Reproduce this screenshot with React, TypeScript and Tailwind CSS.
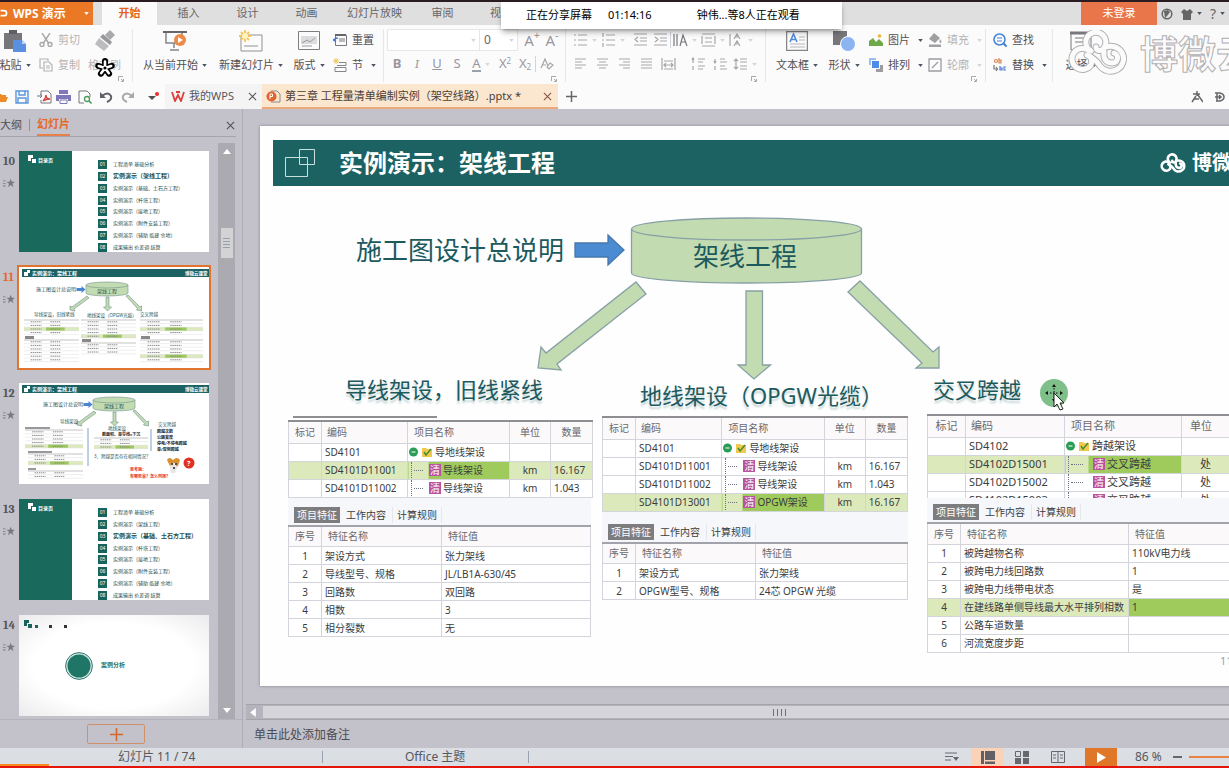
import type { ReactNode } from 'react';
import clsx from 'clsx';

function Caret({ className = 'text-gray-600' }: { className?: string }) {
  return (
    <svg viewBox="0 0 6 4" className={clsx('h-[3px] w-[5px] shrink-0', className)}>
      <path d="M0 0h6L3 4z" fill="currentColor" />
    </svg>
  );
}

function Close() {
  return (
    <svg viewBox="0 0 10 10" className="h-[9px] w-[9px]" stroke="currentColor" strokeWidth="1.2">
      <path d="M1 1l8 8M9 1l-8 8" />
    </svg>
  );
}

/* three joined rings, each closing in a small curl */
function CloudLogo({ className, width = 5 }: { className?: string; width?: number }) {
  return (
    <svg viewBox="0 0 64 46" className={className} fill="none" stroke="currentColor" strokeWidth={width} strokeLinecap="round">
      <path d="M23 21a10 10 0 1 1 13-3c-3 4-8 3-8-1" />
      <path d="M20 20a10.500 10.500 0 1 0 3 15c2-4 0-9-4-10" />
      <path d="M38 17a13 12.500 0 1 1-6 19c-3-5-6-7-9-9" />
      <path d="M36 22c-1 6 2 11 8 11s8-8 2-10" />
    </svg>
  );
}

function BigTool({ icon, label, caret = true, className }: { icon: ReactNode; label: string; caret?: boolean; className?: string }) {
  return (
    <button className={clsx('flex shrink-0 flex-col items-center gap-1', className)}>
      <span className="flex h-6 items-center">{icon}</span>
      <span className="flex h-4 items-center gap-1 whitespace-nowrap">
        {label}
        {caret && <Caret />}
      </span>
    </button>
  );
}

function RowTool({ icon, label, caret, disabled }: { icon: ReactNode; label: string; caret?: boolean; disabled?: boolean }) {
  return (
    <button className={clsx('flex h-4 items-center gap-1 whitespace-nowrap', disabled && 'text-[#b4b4b4]')}>
      <span className="flex w-4 justify-center">{icon}</span>
      {label}
      {caret && <Caret className={disabled ? 'ml-1 text-gray-300' : 'ml-1 text-gray-600'} />}
    </button>
  );
}

function Tool({ label, children, caret, wide }: { label: string; children: ReactNode; caret?: boolean; wide?: boolean }) {
  return (
    <button aria-label={label} className={clsx('flex h-5 shrink-0 items-center justify-center gap-1', caret ? 'w-7' : wide ? 'w-[22px]' : 'w-5')}>
      {children}
      {caret && <Caret className="text-gray-300" />}
    </button>
  );
}

function Lines({ d, dark }: { d: string; dark?: boolean }) {
  return (
    <svg viewBox="0 0 15 14" className="h-[14px] w-[15px] shrink-0" fill="none" stroke={dark ? '#77777c' : '#a5a5a8'} strokeWidth="1.2">
      <path d={d} />
    </svg>
  );
}

function Separator() {
  return <span className="h-4 w-px shrink-0 bg-gray-300" />;
}

function Launcher() {
  return (
    <svg viewBox="0 0 6 6" className="absolute right-2 bottom-0 h-[6px] w-[6px]" fill="none" stroke="#a8a8a8">
      <path d="M.5 5V.5H5M3 3l2 2M5.500 3v2.500H3" />
    </svg>
  );
}

const ribbonTabs = ['插入', '设计', '动画', '幻灯片放映', '审阅'];

function TitleBar() {
  return (
    <header className="relative flex h-[23px] shrink-0 bg-[#dfdfe0] text-[11px] text-[#666]">
      <button className="flex w-[93px] shrink-0 items-center bg-[#ea7824] text-xs font-bold text-white">
        <svg viewBox="0 0 8 14" className="mr-[5px] h-3 w-2" fill="none" stroke="#fff" strokeWidth="2">
          <path d="M0 3h4q3 0 3 3t-3 3H0" />
        </svg>
        WPS 演示
        <span className="ml-auto pr-1"><Caret className="text-white" /></span>
      </button>
      <nav className="ml-[9px] flex">
        <button className="mr-[2px] w-[55px] bg-[#fcfbfc] font-bold text-[#e2641b]">开始</button>
        {ribbonTabs.map((tab) => (
          <button key={tab} className={tab.length > 2 ? 'w-[77px]' : 'w-[59px]'}>{tab}</button>
        ))}
        <button className="pl-[18px]">视</button>
      </nav>
      <div className="ml-auto flex items-stretch">
        <button className="w-[76px] bg-[#e9754a] text-white">未登录</button>
        <div className="flex items-center gap-2 px-1">
          <svg viewBox="0 0 12 12" className="h-3 w-3">
            <circle cx="6" cy="6" r="4.800" fill="none" stroke="#666" strokeWidth="1.500" />
            <path d="M3 3l4-1 2 2-3 4-2 2z" fill="#666" />
          </svg>
          <button aria-label="皮肤" className="flex items-center gap-1">
            <svg viewBox="0 0 12 12" className="h-3 w-3"><path d="M3 1l3 2 3-2 3 3-2 2v6H2V6L0 4z" fill="#666" /></svg>
            <Caret />
          </button>
          <button className="flex items-center gap-1 text-sm leading-none">?<Caret /></button>
        </div>
      </div>
      <div className="absolute -top-px left-[501px] z-10 flex h-7 w-[341px] items-center bg-white pl-[25px] whitespace-nowrap text-black shadow-md shadow-black/30">
        <span>正在分享屏幕</span>
        <time className="ml-4">01:14:16</time>
        <span className="ml-[45px]">钟伟...等8人正在观看</span>
      </div>
    </header>
  );
}

function Ribbon() {
  return (
    <section className="relative flex h-[59px] shrink-0 bg-[#fcfbfc] pt-1 pb-[2px] text-[11px] text-[#505055]">
      <div className="relative flex w-[133px] shrink-0 border-r border-gray-200">
        <BigTool
          className="-ml-1 w-[38px]"
          label="粘贴"
          icon={
            <svg viewBox="0 0 24 24" className="h-6 w-6">
              <path d="M1 4h18v16H1z" fill="#77777b" />
              <path d="M6 1h8v4H6z" fill="#606064" />
              <path d="M10 11h9l4 4v8H10z" fill="#5b8fe0" />
              <path d="M19 11v4h4z" fill="#b9d1f6" />
            </svg>
          }
        />
        <div className="ml-1 flex flex-col gap-[9px] pt-[3px]">
          <RowTool
            disabled
            label="剪切"
            icon={
              <svg viewBox="0 0 14 14" className="h-[14px] w-[14px]" fill="none" stroke="#a8a8a8" strokeWidth="1.400">
                <path d="M3 0l6.500 10M11 0L4.500 10" /><circle cx="3" cy="11.500" r="2" /><circle cx="11" cy="11.500" r="2" />
              </svg>
            }
          />
          <RowTool
            disabled
            label="复制"
            icon={
              <svg viewBox="0 0 14 14" className="h-[14px] w-[14px]" fill="none" stroke="#b4b4b4" strokeWidth="1.200">
                <path d="M9 3V1H1v9h3M5 4h5l3 3v6H5zM7 8h4M7 10h4" />
              </svg>
            }
          />
        </div>
        <div className="ml-2 text-[#b4b4b4]">
          <BigTool
            label="格式刷"
            caret={false}
            icon={
              <svg viewBox="0 0 24 22" className="h-[22px] w-6" fill="#a9a9ab">
                <path d="M17 0l5 5-5 5-5-5z" /><path d="M10 4l9 8-2 3-10-8z" fill="#98989b" /><path d="M6 8l10 8-5 5L2 14z" fill="#bcbcbe" />
              </svg>
            }
          />
        </div>
        <svg viewBox="0 0 20 20" className="absolute top-[29px] left-[95px] h-[20px] w-[20px]" strokeLinecap="round">
          <path d="M10 10V3M10 10l6.700-2.200M10 10l4.100 5.700M10 10l-4.100 5.700M10 10L3.300 7.800" stroke="#000" strokeWidth="6" />
          <path d="M10 10V3.500M10 10l6.200-2M10 10l3.800 5.200M10 10l-3.800 5.200M10 10L3.800 8" stroke="#fff" strokeWidth="2.600" />
          <circle cx="10" cy="10" r="1.600" fill="#000" />
        </svg>
        <Launcher />
      </div>

      <div className="flex w-[251px] shrink-0 border-r border-gray-200 pl-1">
        <BigTool
          className="w-[76px]"
          label="从当前开始"
          icon={
            <svg viewBox="0 0 24 22" className="h-[22px] w-6" fill="none">
              <path d="M0 2h24" stroke="#66666a" strokeWidth="2" /><path d="M3 3v10h16V3M11 13v5M7 20h9" stroke="#85858a" strokeWidth="1.500" />
              <circle cx="17" cy="10" r="6" fill="#ed8a45" /><path d="M15 7l5 3-5 3z" fill="#fff" />
            </svg>
          }
        />
        <BigTool
          className="w-[76px]"
          label="新建幻灯片"
          icon={
            <svg viewBox="0 0 24 22" className="h-[22px] w-6" fill="none">
              <path d="M2 5h21v16H2zM5 16h14" stroke="#909095" />
              <path d="M6 0v12M0 6h12M2 2l8 8M10 2l-8 8" stroke="#f1c453" strokeWidth="1.800" /><circle cx="6" cy="6" r="3" fill="#fff3c4" />
            </svg>
          }
        />
        <BigTool
          className="w-10"
          label="版式"
          icon={
            <svg viewBox="0 0 22 20" className="h-5 w-[22px]" fill="none" stroke="#7e7e83">
              <path d="M.5.5h21v18H.5z" /><path d="M3 5h16v8H3z" fill="#dcdcdf" stroke="none" /><path d="M4 12l5-3 3 2 5-4M4 15h10" stroke="#9a9a9f" />
            </svg>
          }
        />
        <div className="ml-[3px] flex flex-col gap-[9px] pt-[3px]">
          <RowTool
            label="重置"
            icon={
              <svg viewBox="0 0 14 14" className="h-[14px] w-[14px]" fill="none" stroke="#77777c">
                <path d="M2.500 2.500h11v10h-11zM6 6h6M6 8h6" /><path d="M2 2h11" stroke="#66666a" strokeWidth="2" /><path d="M1 8q0-3 4-3M1 8l-1-2M1 8l2-1" stroke="#4c7fd0" strokeWidth="1.400" />
              </svg>
            }
          />
          <RowTool
            label="节"
            caret
            icon={
              <svg viewBox="0 0 14 14" className="h-[14px] w-[14px]" fill="none" stroke="#85858a">
                <path d="M6 4.500h7v3H4M2 9.500h11v4H2z" /><path d="M3 0v6M0 3h6M1 1l4 4M5 1L1 5" stroke="#f1c453" />
              </svg>
            }
          />
        </div>
      </div>

      <div className="relative w-[182px] shrink-0 border-r border-gray-200 pl-[3px] text-[15px] text-[#98989c]">
        <div className="flex h-[22px] items-center">
          <span className="relative flex items-center">
            <select aria-label="字体" className="h-[22px] w-[93px] appearance-none border border-gray-200 bg-white"><option></option></select>
            <span className="absolute right-1"><Caret className="text-gray-300" /></span>
          </span>
          <span className="relative flex items-center">
            <select aria-label="字号" className="h-[22px] w-[38px] appearance-none border border-l-0 border-gray-200 bg-white pl-1 text-xs text-[#66666a]"><option>0</option></select>
            <span className="absolute right-1"><Caret className="text-gray-300" /></span>
          </span>
          <button className="ml-1 flex w-5 items-start justify-center leading-5">
            A<span className="text-[10px] leading-[10px]">+</span>
          </button>
          <button className="flex w-5 items-start justify-center leading-5">
            A<span className="text-[10px] leading-[10px]">-</span>
          </button>
        </div>
        <div className="mt-[3px] flex h-5 items-center text-[13px]">
          <Tool label="加粗"><b>B</b></Tool>
          <Tool label="斜体"><i className="font-serif">I</i></Tool>
          <Tool label="下划线"><u>U</u></Tool>
          <Tool label="阴影"><span>S</span></Tool>
          <Tool label="字体颜色" caret><span className="border-b-2 border-gray-400 leading-[14px]">A</span></Tool>
          <Tool label="上标"><span>X<sup className="text-[8px]">2</sup></span></Tool>
          <Tool label="下标"><span>X<sub className="text-[8px]">2</sub></span></Tool>
          <Separator />
          <Tool label="清除格式"><Lines d="M2 11L6 2l3 7M3 8h4M8 10l3-4 3 2-4 4z" /></Tool>
        </div>
        <Launcher />
      </div>

      <div className="relative w-[200px] shrink-0 border-r border-gray-200 pl-[5px]">
        <div className="flex h-[22px] items-center">
          <Tool label="项目符号" caret><Lines d="M1 2h2M5 2h9M1 7h2M5 7h9M1 12h2M5 12h9" /></Tool>
          <Tool label="编号" caret><Lines d="M2 0v4M5 2h9M1 7h2M5 7h9M2 10v4M5 12h9" /></Tool>
          <span className="w-[3px]" />
          <Tool label="减少缩进"><Lines d="M1 1h13M7 5h7M7 8h7M1 12h13M5 4L2 6.500 5 9" /></Tool>
          <Tool label="增加缩进"><Lines d="M1 1h13M7 5h7M7 8h7M1 12h13M2 4l3 2.500L2 9" /></Tool>
          <Separator />
          <Tool label="文字方向" caret><Lines dark d="M1 1v12M4 1v12M7 13l3-11 4 11M8 9h5" /></Tool>
          <Tool label="对齐文本" caret><Lines d="M1 1h13M1 13h13M1 3v8M14 3v8M4 5h7M4 9h7" /></Tool>
          <Tool label="分散" caret><Lines d="M1 1v12M5 6l3-5 3 5M6 4h4M5 13l3-5 3 5M6 11h4" /></Tool>
        </div>
        <div className="mt-[3px] -ml-[2px] flex h-5 items-center">
          <Tool wide label="左对齐"><Lines d="M2 2h11M2 5h7M2 8h11M2 11h7" /></Tool>
          <Tool wide label="居中"><Lines d="M2 2h11M4 5h7M2 8h11M4 11h7" /></Tool>
          <Tool wide label="右对齐"><Lines d="M2 2h11M6 5h7M2 8h11M6 11h7" /></Tool>
          <Tool wide label="两端对齐"><Lines d="M2 2h11M2 5h11M2 8h11M2 11h11" /></Tool>
          <Tool wide label="分散对齐"><Lines d="M1 1v12M14 1v12M3 4h9M3 12h9M3 8h9M5 6L3 8l2 2M10 6l2 2-2 2" /></Tool>
          <span className="mx-1"><Separator /></span>
          <Tool wide label="段前"><Lines d="M2 1v5M1 3l1-2 1 2M7 2h7M7 5h5M2 9v4M7 9h7M7 12h5" /></Tool>
          <Tool wide label="段后"><Lines d="M2 2v4M1 4l1 2 1-2M7 2h5M7 5h7M2 9v4M7 9h5M7 12h7" /></Tool>
          <Tool caret label="行距"><Lines d="M3 2v10M1 4l2-2 2 2M1 10l2 2 2-2M7 2h7M7 5h7M7 9h7M7 12h7" /></Tool>
        </div>
        <Launcher />
      </div>

      <div className="relative flex w-[220px] shrink-0 border-r border-gray-200 pl-[6px]">
        <BigTool
          className="w-[50px]"
          label="文本框"
          icon={
            <svg viewBox="0 0 22 20" className="h-5 w-[22px]" fill="none" stroke="#85858a">
              <path d="M.5.5h21v19H.5z" strokeWidth="1.500" /><path d="M13 6h6M13 9h6M4 13h15M4 16h15" stroke="#b4b4b8" /><path d="M4 11l3.500-8L11 11M5 8.500h5" stroke="#4c8bd8" strokeWidth="1.600" />
            </svg>
          }
        />
        <BigTool
          className="ml-[2px] w-10"
          label="形状"
          icon={<svg viewBox="0 0 24 22" className="h-[22px] w-6"><path d="M1 1h14v14H1z" fill="#77777b" /><circle cx="16" cy="14" r="7.500" fill="#8bb4f0" stroke="#fff" /></svg>}
        />
        <div className="ml-1 flex flex-col gap-[9px] pt-[3px]">
          <RowTool
            caret
            label="图片"
            icon={<svg viewBox="0 0 14 12" className="h-3 w-[14px]"><path d="M0 12V7l4-3 3 4 3-3 4 4v3z" fill="#6fa84a" /><circle cx="10.500" cy="2" r="1.800" fill="#efb43f" /></svg>}
          />
          <RowTool
            caret
            label="排列"
            icon={<svg viewBox="0 0 14 14" className="h-[14px] w-[14px]"><path d="M0 0h7v7H0z" fill="#9bbdf0" /><path d="M7 7h7v7H7z" fill="#9c9ca1" /><path d="M2.500 2.500h8v8h-8z" fill="#4f8be6" stroke="#fff" /></svg>}
          />
        </div>
        <div className="ml-1 flex flex-col gap-[9px] pt-[3px]">
          <RowTool
            disabled
            caret
            label="填充"
            icon={<svg viewBox="0 0 14 14" className="h-[14px] w-[14px]" fill="#a0a0a3"><path d="M6 0l6 5-5 5-6-4zM1 11.500h12V14H1z" /><path d="M12 6q3 4 0 4-1-1 0-4" /></svg>}
          />
          <RowTool
            disabled
            caret
            label="轮廓"
            icon={<svg viewBox="0 0 14 14" className="h-[14px] w-[14px]" fill="none" stroke="#9c9ca0" strokeWidth="1.300"><path d="M1 1h12v12H1zM4 10l6-6" /></svg>}
          />
        </div>
        <Launcher />
      </div>

      <div className="flex w-[67px] shrink-0 border-r border-gray-200 pl-[6px]">
        <div className="flex flex-col gap-[9px] pt-[3px]">
          <RowTool
            label="查找"
            icon={<svg viewBox="0 0 14 14" className="h-[14px] w-[14px]" fill="none" stroke="#4482d6" strokeWidth="1.500"><circle cx="6.500" cy="6.500" r="5.500" /><path d="M4 5h5M4 8h5" strokeWidth="1" /><path d="M10.500 10.500l3 3" strokeWidth="2" /></svg>}
          />
          <RowTool
            caret
            label="替换"
            icon={
              <svg viewBox="0 0 14 14" className="h-[14px] w-[14px]" fill="none" strokeWidth="1.200">
                <circle cx="3" cy="3" r="1.500" stroke="#d8844e" /><path d="M6 0v5h2V2H6" stroke="#d8844e" /><path d="M1 7v4h3M3 9l1.500 2L3 13" stroke="#77777c" /><path d="M7 8v4h2v-2H7M13 9h-2v3h2" stroke="#4c7fd0" />
              </svg>
            }
          />
        </div>
      </div>
      <BigTool
        className="ml-1 w-12"
        label="选择"
        icon={<svg viewBox="0 0 22 20" className="h-5 w-[22px]" fill="none" stroke="#77777c"><path d="M1 1v18h20V1M5 7h11M5 11h11" /><path d="M0 2h22" strokeWidth="3" /></svg>}
      />
      <div className="pointer-events-none absolute top-[5px] left-[1068px] flex items-center gap-2 whitespace-nowrap">
        <span className="relative">
          <CloudLogo className="h-[46px] w-[64px] text-[#b0b0b3]" width={7} />
          <CloudLogo className="absolute inset-0 h-[46px] w-[64px] text-[#fcfbfc]" width={5} />
        </span>
        <span className="text-[38px] leading-[44px] font-bold text-[#fcfbfc] [-webkit-text-stroke:1px_#b0b0b3]">博微云</span>
      </div>
    </section>
  );
}

function DocumentTabs() {
  return (
    <div className="flex h-[25px] shrink-0 bg-[#fcfbfc] text-[11px] text-[#55555a]">
      <div className="flex w-[165px] shrink-0 items-center">
        <button aria-label="打开" className="-ml-1 w-3"><svg viewBox="0 0 12 12" className="h-3 w-3"><path d="M0 3h5l1 1h4v2h2l-2 5H0z" fill="#f08a24" /></svg></button>
        <button aria-label="保存" className="ml-[7px]"><svg viewBox="0 0 14 14" className="h-[14px] w-[14px]" fill="none" stroke="#5b95dc" strokeWidth="1.400"><path d="M1 1h12v12H1zM4 1v4h6V1M3 13V8h8v5" /></svg></button>
        <button aria-label="输出PDF" className="ml-2"><svg viewBox="0 0 15 14" className="h-[14px] w-[15px]" fill="none" stroke="#77777c"><path d="M4 5V1h7l3 3v9H4v-3" /><path d="M0 6h4M3 4l2 2-2 2" /><path d="M6 11q3-3 3-6 0 4 4 4-4 0-7 2" stroke="#d8423c" strokeWidth="1.400" /></svg></button>
        <button aria-label="打印" className="ml-1"><svg viewBox="0 0 15 14" className="h-[14px] w-[15px]"><path d="M3 0h9v4H3zM0 5h15v6h-3V9H3v2H0z" fill="#7f78b8" /><path d="M4 10h7v3.500H4z" fill="none" stroke="#7f78b8" /></svg></button>
        <button aria-label="打印预览" className="ml-[7px]"><svg viewBox="0 0 14 14" className="h-[14px] w-[14px]" fill="none" stroke="#77777c"><path d="M6 13H1V1h8l3 3v3" /><circle cx="9" cy="9" r="2.500" stroke="#4e9a5c" strokeWidth="1.300" /><path d="M11 11l2.500 2.500" stroke="#4e9a5c" strokeWidth="1.600" /></svg></button>
        <button aria-label="撤销" className="ml-2"><svg viewBox="0 0 13 12" className="h-3 w-[13px]" fill="none" stroke="#606066" strokeWidth="2"><path d="M2 5q6-5 9 0 1 4-4 6" /><path d="M0 1v6h6z" fill="#606066" stroke="none" /></svg></button>
        <button aria-label="恢复" className="ml-2"><svg viewBox="0 0 13 12" className="h-3 w-[13px]" fill="none" stroke="#a8a8ac" strokeWidth="2"><path d="M11 5Q5 0 2 5q-1 4 4 6" /><path d="M13 1v6H7z" fill="#a8a8ac" stroke="none" /></svg></button>
        <span className="ml-[6px]"><Separator /></span>
        <button aria-label="自定义" className="ml-2"><svg viewBox="0 0 11 10" className="h-[10px] w-[11px]"><path d="M0 4h8L4 8z" fill="#505055" /><circle cx="9" cy="2" r="2" fill="#ee2a2a" /></svg></button>
      </div>
      <div className="flex w-[97px] shrink-0 items-center bg-[#f5f4f5] pl-[6px]">
        <svg viewBox="0 0 14 11" className="mr-1 h-[11px] w-[14px]" fill="none" stroke="#dc3f3a" strokeWidth="1.800"><path d="M1 1l3 9 3-6 3 6 3-9M5 1h4" /></svg>
        <a href="#home">我的WPS</a>
        <button aria-label="关闭我的WPS" className="ml-auto pr-[5px]"><Close /></button>
      </div>
      <div className="flex shrink-0 items-center border-b-2 border-[#ecaa78] bg-[#fbe7cf] pt-[2px] pr-[6px] pl-1">
        <svg viewBox="0 0 15 13" className="mr-1 h-[13px] w-[15px]" fill="none"><path d="M5 1h6l3 3v8H5" stroke="#88888c" /><circle cx="5.500" cy="6.500" r="5" fill="#e2622d" /><path d="M4 9V4h2.500v2.500H4" stroke="#fff" /></svg>
        <a href="#document" className="text-[#4a4038]">第三章 工程量清单编制实例（架空线路）.pptx *</a>
        <button aria-label="关闭文档" className="ml-[22px] text-[#8a5540]"><Close /></button>
      </div>
      <button aria-label="新建" className="ml-2"><svg viewBox="0 0 11 11" className="h-[11px] w-[11px]" stroke="#66666a" strokeWidth="1.500"><path d="M0 5.500h11M5.500 0v11" /></svg></button>
      <div className="ml-auto flex items-center gap-3 pr-1">
        <svg viewBox="0 0 12 12" className="h-3 w-3" fill="none" stroke="#66666a" strokeWidth="1.500"><path d="M2 3h7M6 0v5M5 5L1 11M7 4l5 7M3 8h5" /></svg>
        <svg viewBox="0 0 10 10" className="h-[10px] w-[10px]" fill="none" stroke="#66666a" strokeWidth="1.500"><path d="M0 1h5q4 1 4 4t-4 4H1M2 1v8M0 5h6M4 3l2 2-2 2" /></svg>
      </div>
    </div>
  );
}

const agenda = [
  '工程清单 基础分析',
  '实例演示（架线工程）',
  '实例演示（基础、土石方工程）',
  '实例演示（杆塔工程）',
  '实例演示（接地工程）',
  '实例演示（附件安装工程）',
  '实例演示（辅助 临建 余地）',
  '成果输出 价差调 结算',
];

function AgendaThumb({ active }: { active: number }) {
  return (
    <div className="flex h-full bg-white">
      <div className="flex w-[53px] shrink-0 items-start gap-[2px] bg-[#1a695d] pt-1 pl-[9px] text-[5px] leading-[10px] font-bold text-white">
        <svg viewBox="0 0 8 8" className="h-2 w-2"><path d="M0 0h5v3H3v3H0zM4 4h4v4H4z" fill="#fff" /></svg>
        目录页
      </div>
      <ul className="flex flex-1 flex-col justify-between pt-[9px] pl-[26px] text-[5px] leading-[9px] text-[#1c4c48]">
        {agenda.map((item, i) => (
          <li key={item} className="flex items-center gap-[6px] whitespace-nowrap">
            <span className="h-[9px] w-[9px] shrink-0 bg-[#17645c] text-center text-white">{`0${i + 1}`}</span>
            <span className={i === active ? 'text-[6px] font-bold' : ''}>{item}</span>
          </li>
        ))}
      </ul>
    </div>
  );
}

function MiniTable({ x, y, w, rows, mark }: { x: number; y: number; w: number; rows: number; mark?: number }) {
  return (
    <g>
      <path d={`M${x} ${y}h${w}`} stroke="#9a9aa0" strokeWidth=".6" />
      {mark !== undefined && (
        <>
          <rect x={x} y={y + mark * 3.6} width={w} height="3.6" fill="#dbe9bd" />
          <rect x={x + w * 0.4} y={y + mark * 3.6} width={w * 0.34} height="3.6" fill="#9cc95b" />
        </>
      )}
      {Array.from({ length: rows }, (_, i) => (
        <g key={i}>
          <path d={`M${x + w * 0.12} ${y + 1.8 + i * 3.6}h${w * 0.2}M${x + w * 0.48} ${y + 1.8 + i * 3.6}h${w * 0.18}`} stroke="#8a8a8e" strokeWidth="1" strokeDasharray="1.500 .6" />
          <path d={`M${x} ${y + 3.6 + i * 3.6}h${w}`} stroke="#dcdce0" strokeWidth=".5" />
        </g>
      ))}
    </g>
  );
}

function MiniHeader() {
  return (
    <g>
      <path d="M3 2h187v8H3z" fill="#1d6262" />
      <path d="M5 5h4v4H5zM8 3h3v3H8z" fill="#fff" />
      <text x="13" y="8" fontSize="5" fontWeight="700" fill="#fff">实例演示：架线工程</text>
      <text x="166" y="8" fontSize="4.500" fontWeight="700" fill="#fff">博微云课堂</text>
    </g>
  );
}

function MiniDiagram({ dx, dy }: { dx: number; dy: number }) {
  return (
    <g transform={`translate(${dx} ${dy})`}>
      <text x="17" y="24" fontSize="5" fill="#1a5558">施工图设计总说明</text>
      <path d="M57.500 21h5v-2l4 3.500-4 3.500v-2h-5z" fill="#4a86d0" />
      <path d="M67 18a21 3 0 0 1 42 0v8a21 3 0 0 1-42 0z" fill="#c3dbb1" stroke="#6f9090" strokeWidth=".6" />
      <path d="M67 18a21 3 0 0 0 42 0" fill="none" stroke="#6f9090" strokeWidth=".6" />
      <text x="78" y="26" fontSize="5" fill="#1a5558">架线工程</text>
      <path d="M68 29l2 2-15 11 1 2-5-1 0-4 2 1zM87 30h3v10h2.500l-4 4-4-4H87zM107 29l2-1 12 12 1.500-1v5l-5-1 1-1.500z" fill="#c3dbb1" stroke="#6f9090" strokeWidth=".6" />
    </g>
  );
}

function DiagramThumb() {
  return (
    <svg viewBox="0 0 190 101" className="h-full w-full bg-white">
      <MiniHeader />
      <MiniDiagram dx={0} dy={0} />
      <g fontSize="4.500" fill="#1a5558">
        <text x="15" y="49">导线架设，旧线紧线</text>
        <text x="68" y="50">地线架设（OPGW光缆）</text>
        <text x="121" y="49">交叉跨越</text>
      </g>
      <MiniTable x={5} y={53} w={55} rows={4} mark={2} />
      <path d="M6 69h9v3H6z" fill="#888" />
      <MiniTable x={5} y={73} w={55} rows={6} />
      <MiniTable x={62} y={53} w={55} rows={5} mark={4} />
      <path d="M63 72h9v3h-9z" fill="#888" />
      <MiniTable x={62} y={76} w={55} rows={3} />
      <MiniTable x={121} y={53} w={63} rows={4} mark={2} />
      <path d="M122 69h9v3h-9z" fill="#888" />
      <MiniTable x={121} y={73} w={63} rows={6} mark={4} />
    </svg>
  );
}

function QuestionThumb() {
  return (
    <svg viewBox="0 0 190 101" className="h-full w-full bg-white">
      <MiniHeader />
      <MiniDiagram dx={7} dy={-1} />
      <g fontSize="4.500" fill="#1a5558">
        <text x="41" y="40">导线架设</text>
        <text x="89" y="47">地线架设</text>
        <text x="139" y="43">交叉跨越</text>
        <text x="75" y="75">3、跨越是否存在相同情况？</text>
      </g>
      <g fontSize="4" fontWeight="700" fill="#222">
        <text x="83" y="53">截面积、单导线=下沉</text>
        <text x="138" y="50">跨越次数</text>
        <text x="138" y="56">公路宽度</text>
        <text x="138" y="62">停电/不停电跨越</text>
        <text x="138" y="68">单/双侧跨越</text>
      </g>
      <path d="M69 45v38M132 46v22" stroke="#7ba0c8" />
      <path d="M6 44h25v2H6zM9 68h24v2H9zM9 85h8v2H9z" fill="#99999d" />
      <MiniTable x={6} y={47} w={58} rows={5} mark={4} />
      <MiniTable x={9} y={71} w={55} rows={3} mark={2} />
      <MiniTable x={9} y={88} w={55} rows={2} />
      <MiniTable x={75} y={55} w={54} rows={3} mark={2} />
      <g fontSize="4" fontWeight="700" fill="#e33025">
        <text x="111" y="88">思考题：</text>
        <text x="111" y="95">有哪些量？怎么列项？</text>
      </g>
      <path d="M148 77q2-4 6 0 4-4 7 0l-2 6-4 3-4-3z" fill="#d9912f" />
      <path d="M152 80h5l1 5-2 5h-4l-1-5z" fill="#e8e6e4" />
      <circle cx="153" cy="81" r="1" fill="#222" /><circle cx="157" cy="81" r="1" fill="#222" /><circle cx="155" cy="85" r="1" fill="#222" />
      <circle cx="170" cy="80" r="5.500" fill="#e03127" />
      <text x="168" y="83" fontSize="7" fontWeight="700" fill="#fff">?</text>
    </svg>
  );
}

function CaseThumb() {
  return (
    <div className="relative flex h-full items-center bg-radial from-white from-60% to-[#ebebed] pl-[46px]">
      <svg viewBox="0 0 50 10" className="absolute top-[5px] left-[5px] h-[10px] w-[50px]" fill="#17645c"><path d="M0 0h5v3H3v3H0zM4 4h4v4H4zM11 5h3v3h-3z" /><path d="M25 5h3v3h-3zM40 5h3v3h-3z" fill="#333" /></svg>
      <svg viewBox="0 0 28 28" className="h-7 w-7"><circle cx="14" cy="14" r="13.400" fill="#cfe6e0" stroke="#35786f" /><circle cx="14" cy="14" r="11.500" fill="#1f7566" /></svg>
      <span className="ml-2 text-[6px] font-bold text-[#1f7566]">案例分析</span>
    </div>
  );
}

const thumbs = [
  { page: 10, view: <AgendaThumb active={1} /> },
  { page: 11, view: <DiagramThumb /> },
  { page: 12, view: <QuestionThumb /> },
  { page: 13, view: <AgendaThumb active={2} /> },
  { page: 14, view: <CaseThumb /> },
];

function SlidesPane() {
  return (
    <aside className="flex w-[243px] shrink-0 flex-col border-r border-[#aeadb6] text-[11px] text-[#505055]">
      <div className="mr-[6px] flex h-7 shrink-0 items-center border-b border-[#a5a4ad] pt-[5px]">
        <button>大纲</button>
        <span className="mx-[7px] h-3 w-px bg-[#909098]" />
        <button className="h-full border-b-2 border-[#e8804a] font-bold text-[#e5682a]">幻灯片</button>
        <button aria-label="关闭窗格" className="mr-[1px] ml-auto"><Close /></button>
      </div>
      <div className="mt-[6px] mr-[7px] flex min-h-0 flex-1">
        <ol className="flex min-w-0 flex-1 flex-col gap-[15px] overflow-hidden pt-2">
          {thumbs.map(({ page, view }) => (
            <li key={page} className="flex shrink-0">
              <div className={clsx('w-[19px] shrink-0 pt-1 pl-[3px] font-serif text-xs leading-3 font-bold', page === 11 ? 'text-[#e5682a]' : 'text-[#555]')}>
                {page}
                <svg viewBox="0 0 14 10" className="mt-[11px] h-[10px] w-[12px]" fill="#77777e"><path d="M9 0l1.300 3.500H14L11 5.800 12.200 10 9 7.300 5.800 10 7 5.800 4 3.500h3.700zM0 2h3v1H0zM0 5h3v1H0zM0 8h3v1H0z" /></svg>
              </div>
              <button aria-label={`幻灯片 ${page}`} className={clsx('h-[101px] w-[190px] overflow-hidden text-left', page === 11 && 'outline-2 outline-[#e0742f]')}>
                {view}
              </button>
            </li>
          ))}
        </ol>
        <div className="flex w-[17px] shrink-0 flex-col items-center justify-between bg-[#abaab1] py-[6px]">
          <svg viewBox="0 0 8 5" className="h-[5px] w-2"><path d="M0 5h8L4 0z" fill="#fff" /></svg>
          <div className="mt-[74px] mb-auto flex h-[30px] w-3 flex-col items-center justify-center gap-[2px] bg-[#d3d3d6]">
            <span className="h-px w-[7px] bg-gray-400" />
            <span className="h-px w-[7px] bg-gray-400" />
            <span className="h-px w-[7px] bg-gray-400" />
            <span className="h-px w-[7px] bg-gray-400" />
          </div>
          <svg viewBox="0 0 8 5" className="h-[5px] w-2"><path d="M0 0h8L4 5z" fill="#fff" /></svg>
        </div>
      </div>
      <div className="flex h-[29px] shrink-0 items-center border-t border-[#b4b3bb] pl-[87px]">
        <button aria-label="新建幻灯片" className="flex h-5 w-[58px] items-center justify-center rounded-xs border border-[#cf9168]">
          <svg viewBox="0 0 13 13" className="h-[13px] w-[13px]" stroke="#d4682c" strokeWidth="1.600"><path d="M0 6.500h13M6.500 0v13" /></svg>
        </button>
      </div>
    </aside>
  );
}

type Item = { code: string; name: string; unit?: string; amount?: string; parent?: boolean; selected?: boolean };
type Feature = { name: string; value: string; selected?: boolean };

const cell = 'border border-[#d4d4dc] px-[3px] leading-4 font-normal whitespace-nowrap overflow-hidden';

function ItemTable({ items, cols, large }: { items: Item[]; cols: string[]; large?: boolean }) {
  return (
    <table className={clsx('w-full table-fixed border-t-2 border-[#8d8d92] bg-white', large ? 'text-[11px]' : 'text-[10px]')}>
      <colgroup>{cols.map((c, i) => <col key={i} className={c} />)}</colgroup>
      <thead>
        <tr className="h-[22px] bg-[#fbf9fa] text-left text-[#6a6a6e]">
          <th className={clsx(cell, 'text-center')}>标记</th>
          <th className={clsx(cell, 'pl-[5px]')}>编码</th>
          <th className={clsx(cell, 'pl-[6px]')}>项目名称</th>
          <th className={clsx(cell, large ? 'pl-2' : 'text-center')}>单位</th>
          {!large && <th className={clsx(cell, 'text-center')}>数量</th>}
        </tr>
      </thead>
      <tbody>
        {items.map((it) => (
          <tr key={it.code} className={clsx('h-[18px]', it.selected && 'bg-[#dbe9bb]')}>
            <td className={cell} />
            <td className={cell}>{it.code}</td>
            <td className={clsx(cell, it.selected && 'bg-linear-to-r from-transparent from-20% to-[#9fcb5d] to-20%')}>
              <span className="flex h-4 items-center gap-[2px]">
                {it.parent ? (
                  <svg viewBox="0 0 24 12" className="-ml-[2px] h-3 w-6">
                    <circle cx="4.500" cy="6" r="4.500" fill="#2a9d55" /><path d="M2.500 6h4" stroke="#fff" />
                    <path d="M13 2h4l1 1h5v8H13z" fill="#efc94c" /><path d="M15 6l2 3 5-6" stroke="#4a8a3a" strokeWidth="1.500" fill="none" />
                  </svg>
                ) : (
                  <>
                    <span className="h-4 w-px border-l border-dotted border-gray-500" />
                    <span className={clsx('border-t border-dotted border-gray-500', large ? 'mr-2 w-3' : 'mr-1 w-[9px]')} />
                    <span className="h-3 w-3 shrink-0 bg-[#b7539f] text-center text-[10px] leading-3 text-white">清</span>
                  </>
                )}
                {it.name}
              </span>
            </td>
            <td className={clsx(cell, large ? 'pl-[18px]' : 'text-center')}>{it.unit}</td>
            {!large && <td className={cell}>{it.amount}</td>}
          </tr>
        ))}
      </tbody>
    </table>
  );
}

function FeaturePanel({ features, cols }: { features: Feature[]; cols: string[] }) {
  return (
    <div className="text-[10px]">
      <div className="flex h-[18px] items-start pl-[6px] leading-4">
        <button className="bg-[#7d7d80] px-[3px] text-white">项目特征</button>
        <button className="px-[6px]">工作内容</button>
        <button className="border-x border-gray-200 px-1">计算规则</button>
      </div>
      <table className="w-full table-fixed border-t-2 border-[#a2a2aa] bg-white">
        <colgroup>{cols.map((c, i) => <col key={i} className={c} />)}</colgroup>
        <thead>
          <tr className="h-[21px] bg-[#fbf9fa] text-left text-[#6a6a6e]">
            <th className={clsx(cell, 'text-center')}>序号</th>
            <th className={clsx(cell, 'pl-[6px]')}>特征名称</th>
            <th className={clsx(cell, 'pl-[6px]')}>特征值</th>
          </tr>
        </thead>
        <tbody>
          {features.map((f, i) => (
            <tr key={f.name} className={clsx('h-[18px]', f.selected && 'bg-[#dbe9bb]')}>
              <td className={clsx(cell, 'text-center')}>{i + 1}</td>
              <td className={cell}>{f.name}</td>
              <td className={clsx(cell, f.selected && 'bg-[#9fcb5d]')}>{f.value}</td>
            </tr>
          ))}
        </tbody>
      </table>
    </div>
  );
}

const wireItems: Item[] = [
  { code: 'SD4101', name: '导地线架设', parent: true },
  { code: 'SD4101D11001', name: '导线架设', unit: 'km', amount: '16.167' },
  { code: 'SD4101D11002', name: '导线架设', unit: 'km', amount: '1.043' },
];
const itemCols = ['w-[33px]', 'w-[86px]', 'w-[102px]', 'w-[41px]', 'w-[42px]'];
const featureCols = ['w-[33px]', 'w-[120px]', ''];

const heading = 'absolute text-[22px] leading-8 whitespace-nowrap text-[#1c5a5e] [text-shadow:0_3px_2px_rgb(28_90_94/0.25)]';

function Slide() {
  return (
    <article className="relative h-[560px] w-[1053px] shrink-0 bg-[#fefefe] text-[#3c3c40] shadow-[0_0_3px_#85848d]">
      <div className="px-[13px] pt-[14px]">
        <h1 className="flex h-[46px] items-center bg-[#1d6262] text-2xl font-bold text-white">
          <svg viewBox="0 0 30 28" className="mr-6 ml-3 h-7 w-[30px]" fill="none" stroke="#c9e0de"><path d="M.5 8.500h22v19H.5zM14.500.5h15v15h-15z" /></svg>
          实例演示：架线工程
          <span className="mr-2 ml-auto flex items-center gap-1 text-xl"><CloudLogo className="h-[21px] w-7" width={6} />博微云课堂</span>
        </h1>
      </div>
      <svg viewBox="0 0 1053 560" className="pointer-events-none absolute inset-0 h-full w-full" fill="#c3dbb1" stroke="#87a0a6" strokeWidth="1.300">
        <path d="M315 117h33v-8l16 15-16 15v-8h-33z" fill="#4a8bd2" stroke="#4678ad" />
        <path d="M371.500 103a115 11 0 0 1 230 0v44a115 10 0 0 1-230 0z" />
        <path d="M371.500 103a115 11 0 0 0 230 0" fill="none" />
        <path d="M376 156l10 12-89 70 4 6-23-2 3-21 5 6z" />
        <path d="M486 165h16.500v74h8L494 253l-16-14h8z" />
        <path d="M600 155l73 71 6-5v21h-23l6-5-74-71z" />
      </svg>
      <p className="absolute top-[106px] left-[96px] text-[26px] leading-9 text-[#1c5a5e]">施工图设计总说明</p>
      <p className="absolute top-[112px] left-[433px] text-[26px] leading-9 text-[#1c5a5e]">架线工程</p>
      <h2 className={clsx(heading, 'top-[247px] left-[85px]')}>导线架设，旧线紧线</h2>
      <h2 className={clsx(heading, 'top-[253px] left-[380px]')}>地线架设（OPGW光缆）</h2>
      <h2 className={clsx(heading, 'top-[247px] left-[673px]')}>交叉跨越</h2>

      <section className="absolute top-[290px] left-[28px] flex w-[303px] flex-col gap-[9px] bg-[#f5f7fa]">
        <div>
          <div className="bg-[#fefefe] pb-[2px] pl-[5px]"><div className="h-[2px] w-36 bg-[#8d8d92]" /></div>
          <ItemTable cols={itemCols} items={wireItems.map((it, i) => ({ ...it, selected: i === 1 }))} />
        </div>
        <FeaturePanel
          cols={featureCols}
          features={[
            { name: '架设方式', value: '张力架线' },
            { name: '导线型号、规格', value: 'JL/LB1A-630/45' },
            { name: '回路数', value: '双回路' },
            { name: '相数', value: '3' },
            { name: '相分裂数', value: '无' },
          ]}
        />
      </section>

      <section className="absolute top-[290px] left-[342px] flex w-[306px] flex-col gap-3 bg-[#f5f7fa]">
        <ItemTable cols={itemCols} items={[...wireItems, { code: 'SD4101D13001', name: 'OPGW架设', unit: 'km', amount: '16.167', selected: true }]} />
        <FeaturePanel
          cols={featureCols}
          features={[
            { name: '架设方式', value: '张力架线' },
            { name: 'OPGW型号、规格', value: '24芯 OPGW 光缆' },
          ]}
        />
      </section>

      <section className="absolute top-[288px] left-[667px] flex w-[360px] flex-col gap-[6px] bg-[#f5f7fa]">
        <div className="h-[84px] overflow-hidden">
          <ItemTable
            large
            cols={['w-[38px]', 'w-[99px]', 'w-[117px]', '']}
            items={[
              { code: 'SD4102', name: '跨越架设', parent: true },
              { code: 'SD4102D15001', name: '交叉跨越', unit: '处', selected: true },
              { code: 'SD4102D15002', name: '交叉跨越', unit: '处' },
              { code: 'SD4102D15003', name: '交叉跨越', unit: '处' },
            ]}
          />
        </div>
        <FeaturePanel
          cols={['w-[33px]', 'w-[168px]', '']}
          features={[
            { name: '被跨越物名称', value: '110kV电力线' },
            { name: '被跨电力线回路数', value: '1' },
            { name: '被跨电力线带电状态', value: '是' },
            { name: '在建线路单侧导线最大水平排列相数', value: '1', selected: true },
            { name: '公路车道数量', value: '' },
            { name: '河流宽度步距', value: '' },
          ]}
        />
      </section>
      <span className="absolute top-[527px] left-[960px] text-[11px] text-gray-400">11</span>

      <svg viewBox="0 0 30 32" className="absolute top-[253px] left-[779px] h-8 w-[30px]">
        <circle cx="15" cy="14" r="14" fill="#7fbf89" />
        <path d="M15 5l2 3h-4zM6 14l3-2v4zM24 14l-3-2v4zM15 23l2-3h-4z" fill="#111" />
        <path d="M15 9v10M11 14h8" stroke="#111" strokeDasharray="1.500 1.500" />
        <path d="M15 14v14l3-3 3 6 3-1-3-6h4z" fill="#fff" stroke="#222" />
      </svg>
    </article>
  );
}

function Editor() {
  return (
    <main className="flex min-w-0 flex-1 flex-col pl-[3px]">
      <div className="flex min-h-0 flex-1 overflow-hidden pt-[17px] pl-[14px]">
        <Slide />
      </div>
      <div className="flex h-4 shrink-0 items-center border-y border-[#a4a3aa] bg-[#b5b4bc]">
        <svg viewBox="0 0 5 8" className="mr-[7px] ml-1 h-[9px] w-[6px]"><path d="M5 0v8L0 4z" fill="#fff" /></svg>
        <div className="flex h-3 flex-1 items-center justify-center gap-[2px] bg-[#d5d5d9] pr-[66px] pl-[132px]">
          <span className="mr-px h-[7px] w-px bg-gray-500" />
          <span className="mr-px h-[7px] w-px bg-gray-500" />
          <span className="mr-px h-[7px] w-px bg-gray-500" />
          <span className="h-[7px] w-px bg-gray-500" />
        </div>
      </div>
      <input aria-label="备注" placeholder="单击此处添加备注" className="h-7 shrink-0 bg-transparent pl-2 text-xs placeholder:text-[#4c4c52]" />
    </main>
  );
}

function StatusBar() {
  return (
    <footer className="relative flex h-[18px] shrink-0 items-center overflow-hidden bg-[#dbdfe4] text-xs whitespace-nowrap text-[#55585e]">
      <span className="absolute bottom-0 left-0 h-[2px] w-[49px] bg-[#f58a1f]" />
      <span className="w-[322px] pl-[118px]">幻灯片 11 / 74</span>
      <span className="w-[207px] border-x border-gray-400 pl-[82px] leading-3">Office 主题</span>
      <div className="ml-auto flex h-full shrink-0 items-center">
        <button aria-label="备注" className="mr-3"><svg viewBox="0 0 14 10" className="h-[10px] w-[14px]" fill="none" stroke="#66686e"><path d="M0 1h12M0 4.500h8M0 8h6" /><path d="M8 5h6l-3 4z" fill="#66686e" stroke="none" /></svg></button>
        <button aria-label="普通视图" className="flex h-full w-[33px] items-center justify-center bg-[#fad2b8]"><svg viewBox="0 0 14 13" className="h-[13px] w-[14px]" fill="#606066"><path d="M0 0h3v13H0zM4 0h10v9H4zM4 10.500h10V13H4z" /></svg></button>
        <button aria-label="浏览视图" className="flex w-9 items-center justify-center"><svg viewBox="0 0 14 13" className="h-[13px] w-[14px]" fill="#66686e"><path d="M8 0h6v6H8zM0 7h6v6H0zM8 7h6v6H8z" /><path d="M.5.5h5v5h-5z" fill="none" stroke="#66686e" /></svg></button>
        <button aria-label="阅读视图" className="flex w-9 items-center justify-center"><svg viewBox="0 0 14 12" className="h-3 w-[14px]" fill="none" stroke="#66686e"><path d="M.5.5h13v11H.5zM7 0v12M2 4h3M2 7h3M9 4h3M9 7h3" /></svg></button>
        <button aria-label="放映" className="ml-[9px] flex h-full w-8 items-center justify-center bg-[#e07627]"><svg viewBox="0 0 9 11" className="h-[11px] w-[9px]"><path d="M0 0v11l9-5.500z" fill="#fff" /></svg></button>
        <label htmlFor="zoom" className="ml-[18px] w-9 leading-3">86 %</label>
        <button aria-label="缩小" className="ml-[2px] h-[2px] w-[9px] bg-[#66686e]" />
        <input id="zoom" type="range" max={100} defaultValue={100} className="-mr-[72px] ml-[7px] h-[2px] w-28 appearance-none bg-[#e58244] [&::-webkit-slider-thumb]:appearance-none" />
      </div>
    </footer>
  );
}

export default function App() {
  return (
    <div className="flex h-screen flex-col overflow-hidden border-t-2 border-b-2 border-t-[#2b1b22] border-b-[#e5150c] bg-[#c3c2cb] font-['Noto_Sans','Noto_Sans_CJK_SC',sans-serif]">
      <TitleBar />
      <Ribbon />
      <DocumentTabs />
      <div className="flex min-h-0 flex-1">
        <SlidesPane />
        <Editor />
      </div>
      <StatusBar />
    </div>
  );
}
